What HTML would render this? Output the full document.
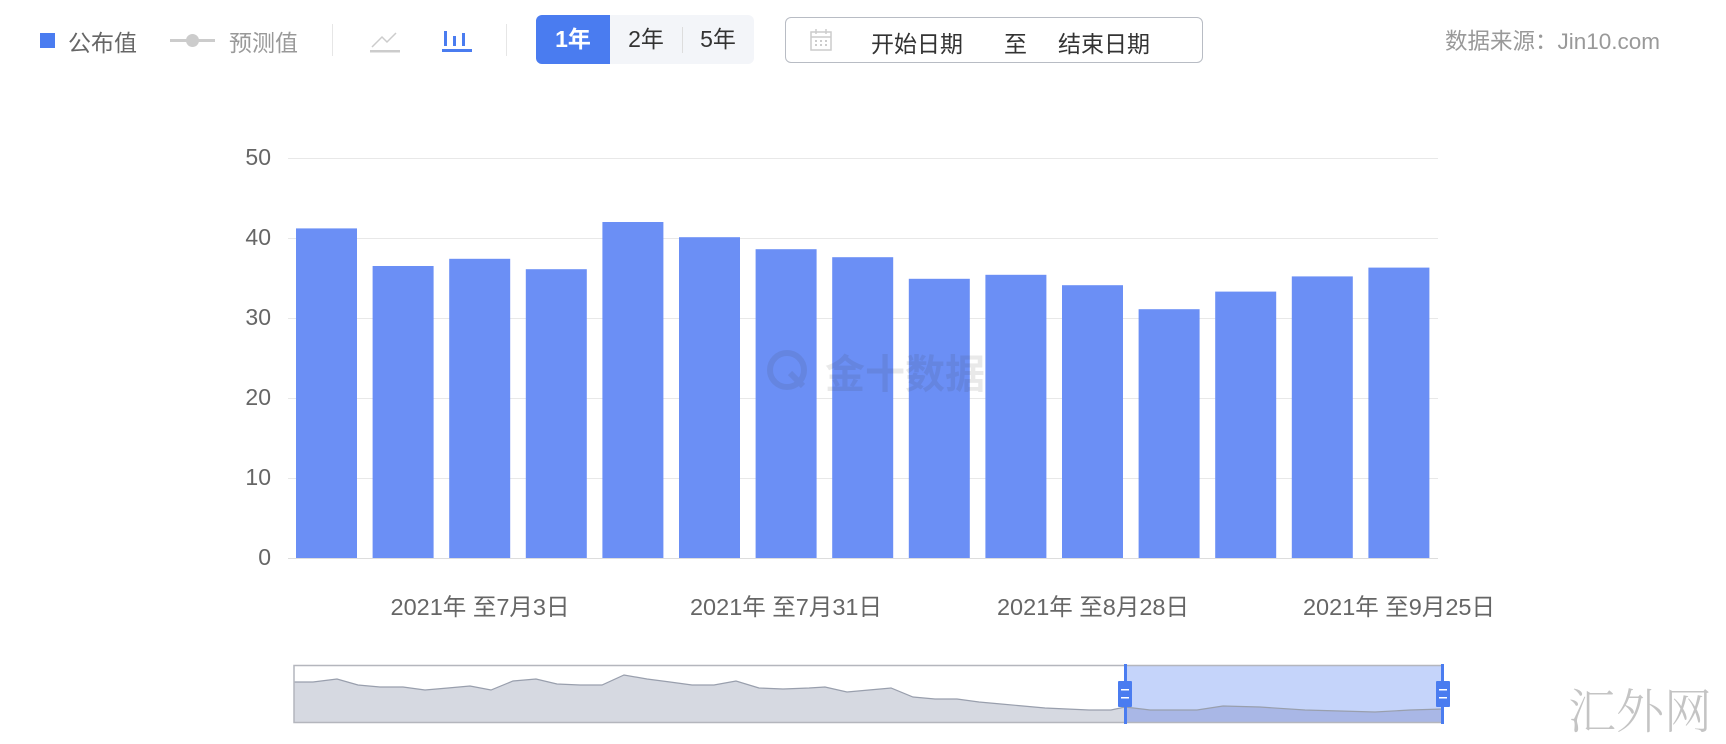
<!DOCTYPE html>
<html><head><meta charset="utf-8"><style>
body{margin:0;width:1726px;height:744px;background:#fff;font-family:"Liberation Sans","Noto Sans CJK SC",sans-serif;position:relative;overflow:hidden}
.a{position:absolute;white-space:nowrap}
</style></head><body>
<div class="a" style="left:40px;top:33px;width:15px;height:15px;background:#4a7cf0"></div>
<div class="a" style="left:68px;top:24px;font-size:23px;color:#666">公布值</div>
<div class="a" style="left:170px;top:39px;width:45px;height:3px;background:#ccc"></div>
<div class="a" style="left:186px;top:34px;width:13px;height:13px;border-radius:50%;background:#ccc"></div>
<div class="a" style="left:229px;top:24px;font-size:23px;color:#999">预测值</div>
<div class="a" style="left:332px;top:24px;width:1px;height:32px;background:#e6e6e6"></div>
<svg class="a" style="left:368px;top:27px" width="34" height="26"><polyline points="4,20 14,10 19,15 28,6" fill="none" stroke="#ccc" stroke-width="1.5"/><rect x="2" y="23" width="30" height="2.5" fill="#ccc"/></svg>
<svg class="a" style="left:440px;top:27px" width="34" height="26"><rect x="4" y="4" width="3" height="15" fill="#4a7cf0"/><rect x="13" y="9" width="3" height="10" fill="#4a7cf0"/><rect x="22" y="6" width="3" height="13" fill="#4a7cf0"/><rect x="2" y="22" width="30" height="3" fill="#4a7cf0"/></svg>
<div class="a" style="left:506px;top:24px;width:1px;height:32px;background:#e6e6e6"></div>
<div class="a" style="left:536px;top:15px;width:218px;height:49px;background:#f3f5f9;border-radius:6px"></div>
<div class="a" style="left:536px;top:15px;width:74px;height:49px;background:#4a7cf0;border-radius:6px 0 0 6px;color:#fff;font-size:23px;font-weight:bold;line-height:49px;text-align:center">1年</div>
<div class="a" style="left:610px;top:15px;width:72px;height:49px;color:#333;font-size:23px;line-height:49px;text-align:center">2年</div>
<div class="a" style="left:682px;top:27px;width:1px;height:26px;background:#ddd"></div>
<div class="a" style="left:682px;top:15px;width:72px;height:49px;color:#333;font-size:23px;line-height:49px;text-align:center">5年</div>
<div class="a" style="left:785px;top:17px;width:416px;height:44px;border:1px solid #b8bcc4;border-radius:6px"></div>
<svg class="a" style="left:809px;top:28px" width="24" height="24"><rect x="2" y="4" width="20" height="18" fill="none" stroke="#ccc" stroke-width="1.5"/><line x1="2" y1="9" x2="22" y2="9" stroke="#ccc" stroke-width="1.5"/><line x1="7" y1="1" x2="7" y2="6" stroke="#ccc" stroke-width="1.5"/><line x1="17" y1="1" x2="17" y2="6" stroke="#ccc" stroke-width="1.5"/><g fill="#ccc"><rect x="6" y="12" width="2" height="2"/><rect x="11" y="12" width="2" height="2"/><rect x="16" y="12" width="2" height="2"/><rect x="6" y="16" width="2" height="2"/><rect x="11" y="16" width="2" height="2"/><rect x="16" y="16" width="2" height="2"/></g></svg>
<div class="a" style="left:871px;top:25px;font-size:23px;color:#333">开始日期</div>
<div class="a" style="left:1004px;top:25px;font-size:23px;color:#333">至</div>
<div class="a" style="left:1058px;top:25px;font-size:23px;color:#333">结束日期</div>
<div class="a" style="left:1445px;top:24px;font-size:22.5px;color:#999">数据来源：Jin10.com</div>

<svg class="a" style="left:0;top:0" width="1726" height="744">
<g stroke="#e8e8e8" stroke-width="1">
<line x1="288" y1="158.5" x2="1438" y2="158.5"/><line x1="288" y1="238.5" x2="1438" y2="238.5"/><line x1="288" y1="318.5" x2="1438" y2="318.5"/><line x1="288" y1="398.5" x2="1438" y2="398.5"/><line x1="288" y1="478.5" x2="1438" y2="478.5"/></g>
<line x1="288" y1="558.5" x2="1438" y2="558.5" stroke="#ddd"/>
<g font-size="23" fill="#666" text-anchor="end" font-family="Liberation Sans,sans-serif">
<text x="271" y="165">50</text><text x="271" y="245">40</text><text x="271" y="325">30</text><text x="271" y="405">20</text><text x="271" y="485">10</text><text x="271" y="565">0</text></g>
<g fill="#6b8ff5">
<rect x="296" y="228.4" width="61" height="329.6"/>
<rect x="372.6" y="266" width="61" height="292"/>
<rect x="449.2" y="258.8" width="61" height="299.2"/>
<rect x="525.8" y="269.2" width="61" height="288.8"/>
<rect x="602.4" y="222" width="61" height="336"/>
<rect x="679" y="237.2" width="61" height="320.8"/>
<rect x="755.6" y="249.2" width="61" height="308.8"/>
<rect x="832.2" y="257.2" width="61" height="300.8"/>
<rect x="908.8" y="278.8" width="61" height="279.2"/>
<rect x="985.4" y="274.8" width="61" height="283.2"/>
<rect x="1062" y="285.2" width="61" height="272.8"/>
<rect x="1138.6" y="309.2" width="61" height="248.8"/>
<rect x="1215.2" y="291.6" width="61" height="266.4"/>
<rect x="1291.8" y="276.4" width="61" height="281.6"/>
<rect x="1368.4" y="267.6" width="61" height="290.4"/>
</g>
<g opacity="0.1" fill="#333"><circle cx="787" cy="370" r="17" fill="none" stroke="#333" stroke-width="6"/><line x1="790" y1="373" x2="803" y2="386" stroke="#333" stroke-width="6"/><text x="825" y="388" font-size="40" font-weight="bold" font-family="Noto Sans CJK SC,sans-serif">金十数据</text></g>
<g font-size="23.5" fill="#666" text-anchor="middle">
<text x="480" y="615">2021年 至7月3日</text><text x="786" y="615">2021年 至7月31日</text><text x="1093" y="615">2021年 至8月28日</text><text x="1399" y="615">2021年 至9月25日</text></g>
<rect x="1125" y="665" width="318" height="58" fill="#c5d4fa"/>
<polygon fill="#d6d9e1" points="294,722 294,682 313,682 337,679 358,685 380,687 403,687 425,690 448,688 470,686 491,690 513,681 536,679 557,684 580,685 602,685 624,675 647,679 670,682 692,685 714,685 736,681 759,688 783,689 809,688 825,687 847,692 869,690 891,688 913,697 935,699 957,699 979,702 1001,704 1023,706 1045,708 1067,709 1089,710 1111,710 1125,707 1125,722"/>
<polygon fill="#a9b7e6" points="1125,722 1125,707 1150,710 1197,710 1223,706 1260,707 1305,710 1340,711 1375,712 1410,710 1443,709 1443,722"/>
<polyline fill="none" stroke="#999fad" stroke-width="1.2" points="294,682 313,682 337,679 358,685 380,687 403,687 425,690 448,688 470,686 491,690 513,681 536,679 557,684 580,685 602,685 624,675 647,679 670,682 692,685 714,685 736,681 759,688 783,689 809,688 825,687 847,692 869,690 891,688 913,697 935,699 957,699 979,702 1001,704 1023,706 1045,708 1067,709 1089,710 1111,710 1125,707 1150,710 1197,710 1223,706 1260,707 1305,710 1340,711 1375,712 1410,710 1443,709"/>
<rect x="294" y="665.5" width="1149" height="57" fill="none" stroke="#b4b6bd" stroke-width="1.5"/>
<rect x="1124" y="664" width="3" height="60" fill="#4a7cf0"/><rect x="1441" y="664" width="3" height="60" fill="#4a7cf0"/>
<rect x="1118" y="681" width="14" height="26" fill="#4a7cf0" rx="1"/><rect x="1436" y="681" width="14" height="26" fill="#4a7cf0" rx="1"/>
<g fill="#fff"><rect x="1121" y="689" width="8" height="1.5"/><rect x="1121" y="697" width="8" height="1.5"/><rect x="1439" y="689" width="8" height="1.5"/><rect x="1439" y="697" width="8" height="1.5"/></g>
</svg>
<div class="a" style="left:1568px;top:680px;font-size:48px;line-height:56px;color:#c4c4c4;font-family:'Noto Serif CJK SC',serif;font-weight:300">汇外网</div>
</body></html>
